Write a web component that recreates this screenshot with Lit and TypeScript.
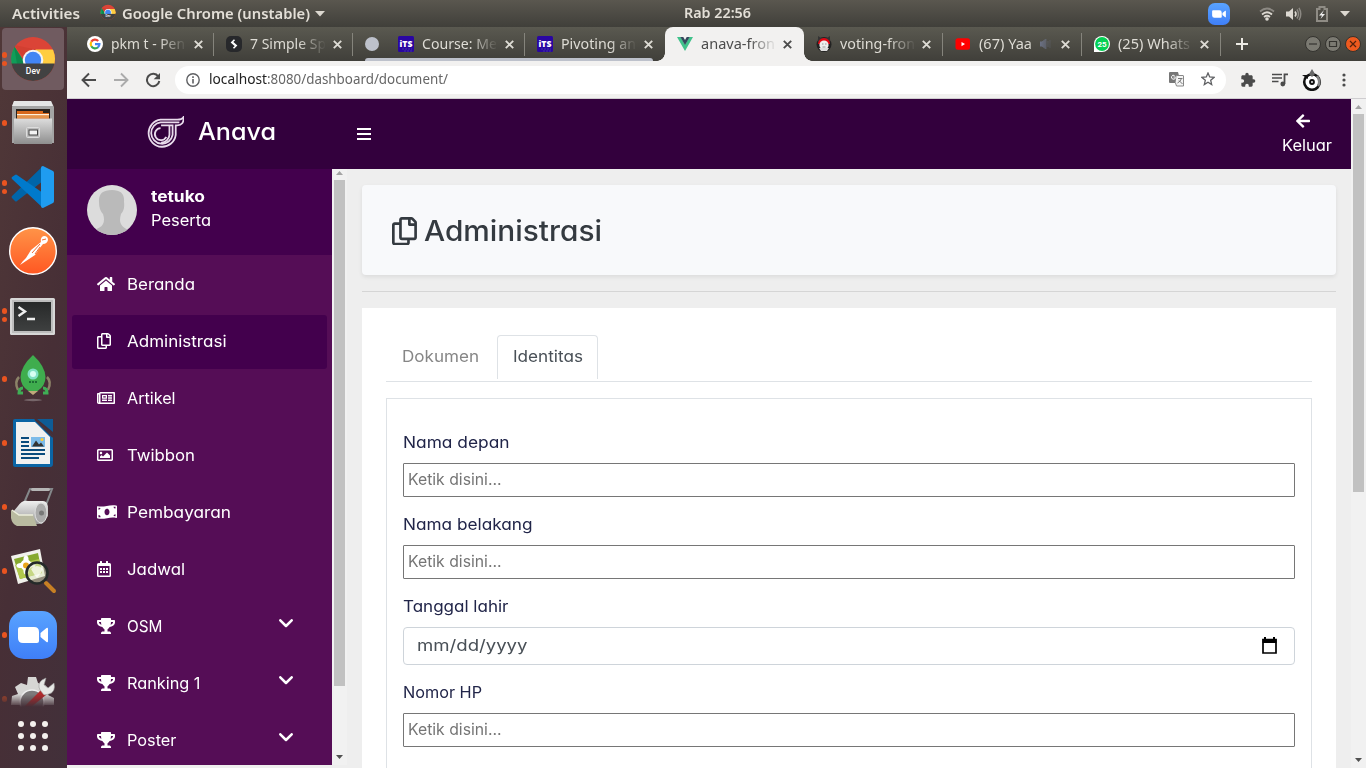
import { LitElement, html, svg, css, nothing } from "lit";
import { customElement, property } from "lit/decorators.js";
import { classMap } from "lit/directives/class-map.js";

/** A single line of text stretched horizontally to a given width. */
@customElement("fit-label")
class FitLabel extends LitElement {
  @property() text = "";
  @property({ type: Number }) w = 0;
  static styles = css`
    :host { display: inline-block; white-space: pre; }
    span { display: inline-block; transform-origin: 0 50%; }
  `;
  render() {
    return html`<span>${this.text}</span>`;
  }
  updated() {
    const el = this.renderRoot.querySelector("span") as HTMLElement;
    el.style.transform = "none";
    this.style.width = "auto";
    const natural = el.getBoundingClientRect().width;
    if (this.w && natural) {
      el.style.transform = `scaleX(${this.w / natural})`;
      this.style.width = `${this.w}px`;
    }
  }
}

const label = (text: string, w: number) => html`<fit-label .text=${text} .w=${w}></fit-label>`;

const fa = (w: number, d: string, size = 16, color = "#fff") =>
  html`<svg width=${(w / 512) * size} height=${size} viewBox="0 0 ${w} 512"><path fill=${color} fill-rule="evenodd" d=${d} /></svg>`;

const HOME = "M280.37 148.26L96 300.11V464a16 16 0 0 0 16 16l112.06-.29a16 16 0 0 0 15.92-16V368a16 16 0 0 1 16-16h64a16 16 0 0 1 16 16v95.64a16 16 0 0 0 16 16.05L464 480a16 16 0 0 0 16-16V300L295.67 148.26a12.19 12.19 0 0 0-15.3 0zM571.6 251.47L488 182.56V44.05a12 12 0 0 0-12-12h-56a12 12 0 0 0-12 12v72.61L318.47 43a48 48 0 0 0-61 0L4.34 251.47a12 12 0 0 0-1.6 16.9l25.5 31A12 12 0 0 0 45.15 301l235.22-193.74a12.19 12.19 0 0 1 15.3 0L530.9 301a12 12 0 0 0 16.9-1.6l25.5-31a12 12 0 0 0-1.7-16.93z";
const COPY = "M433.941 65.941l-51.882-51.882A48 48 0 0 0 348.118 0H176c-26.51 0-48 21.49-48 48v48H48c-26.51 0-48 21.49-48 48v320c0 26.51 21.49 48 48 48h224c26.51 0 48-21.49 48-48v-48h80c26.51 0 48-21.49 48-48V99.882a48 48 0 0 0-14.059-33.941zM266 464H54a6 6 0 0 1-6-6V150a6 6 0 0 1 6-6h74v224c0 26.51 21.49 48 48 48h96v42a6 6 0 0 1-6 6zm128-96H182a6 6 0 0 1-6-6V54a6 6 0 0 1 6-6h106v88c0 13.255 10.745 24 24 24h88v202a6 6 0 0 1-6 6zm6-256h-64V48h9.632c1.591 0 3.117.632 4.243 1.757l48.368 48.368a6 6 0 0 1 1.757 4.243V112z";
const NEWS = "M552 64H112c-20.858 0-38.643 13.377-45.248 32H24c-13.255 0-24 10.745-24 24v272c0 30.928 25.072 56 56 56h496c13.255 0 24-10.745 24-24V88c0-13.255-10.745-24-24-24zM48 392V144h16v248c0 4.411-3.589 8-8 8s-8-3.589-8-8zm480 8H111.422c.374-2.614.578-5.283.578-8V112h416v288zM172 280h136c6.627 0 12-5.373 12-12v-96c0-6.627-5.373-12-12-12H172c-6.627 0-12 5.373-12 12v96c0 6.627 5.373 12 12 12zm28-80h80v40h-80v-40zm-40 140v-24c0-6.627 5.373-12 12-12h136c6.627 0 12 5.373 12 12v24c0 6.627-5.373 12-12 12H172c-6.627 0-12-5.373-12-12zm192 0v-24c0-6.627 5.373-12 12-12h104c6.627 0 12 5.373 12 12v24c0 6.627-5.373 12-12 12H364c-6.627 0-12-5.373-12-12zm0-144v-24c0-6.627 5.373-12 12-12h104c6.627 0 12 5.373 12 12v24c0 6.627-5.373 12-12 12H364c-6.627 0-12-5.373-12-12zm0 72v-24c0-6.627 5.373-12 12-12h104c6.627 0 12 5.373 12 12v24c0 6.627-5.373 12-12 12H364c-6.627 0-12-5.373-12-12z";
const IMAGE = "M464 64H48C21.49 64 0 85.49 0 112v288c0 26.51 21.49 48 48 48h416c26.51 0 48-21.49 48-48V112c0-26.51-21.49-48-48-48zm-6 336H54a6 6 0 0 1-6-6V118a6 6 0 0 1 6-6h404a6 6 0 0 1 6 6v276a6 6 0 0 1-6 6zM128 152c-22.091 0-40 17.909-40 40s17.909 40 40 40 40-17.909 40-40-17.909-40-40-40zM96 352h320v-80l-87.515-87.515c-4.686-4.686-12.284-4.686-16.971 0L192 304l-39.515-39.515c-4.686-4.686-12.284-4.686-16.971 0L96 304v48z";
const TROPHY = "M552 64H448V24c0-13.3-10.7-24-24-24H152c-13.3 0-24 10.7-24 24v40H24C10.7 64 0 74.7 0 88v56c0 35.7 22.5 72.4 61.9 100.7 31.5 22.7 69.8 37.1 110 41.7C203.3 338.5 240 360 240 360v72h-48c-35.3 0-64 20.7-64 56v12c0 6.6 5.4 12 12 12h296c6.6 0 12-5.4 12-12v-12c0-35.3-28.7-56-64-56h-48v-72s36.7-21.5 68.1-73.6c40.3-4.6 78.6-19 110-41.7 39.3-28.3 61.9-65 61.9-100.7V88c0-13.3-10.7-24-24-24zM99.3 192.8C74.9 175.2 64 155.6 64 144v-16h64.2c1 32.6 5.8 61.2 12.8 86.2-15.1-5.2-29.2-12.4-41.7-21.4zM512 144c0 16.1-17.7 36.1-35.3 48.8-12.5 9-26.7 16.2-41.8 21.4 7-25 11.8-53.6 12.8-86.2H512v16z";
const ARROW = "M257.5 445.1l-22.2 22.2c-9.4 9.4-24.6 9.4-33.9 0L7 273c-9.4-9.4-9.4-24.6 0-33.9L201.4 44.7c9.4-9.4 24.6-9.4 33.9 0l22.2 22.2c9.5 9.5 9.3 25-.4 34.3L136.6 216H424c13.3 0 24 10.7 24 24v32c0 13.3-10.7 24-24 24H136.6l120.5 114.8c9.8 9.3 10 24.8.4 34.3z";

const money = html`<svg width="20" height="16" viewBox="0 0 20 16"><path fill="#fff" fill-rule="evenodd" d="M0 2.6Q0 2 .8 2.2C7 3.6 12 .2 19.2 1.4q.8.2.8.9v11q0 .8-.8.6C13 12.4 8 15.800 .8 14.600Q0 14.400 0 13.700zM10 4.800c-1.500 0-2.500 1.400-2.500 3.200s1 3.200 2.500 3.200 2.500-1.400 2.500-3.200S11.500 4.800 10 4.800zM1.500 3.700v2a2 2 0 0 0 2-1.800zM18.500 12.300v-2a2 2 0 0 0-2 1.700zM1.500 11v2.200l2 .1A2 2 0 0 0 1.500 11zM16.500 2.700a2 2 0 0 0 2 1.900V2.800z"/></svg>`;
const calendar = html`<svg width="14" height="16" viewBox="0 0 14 16"><path fill="#fff" fill-rule="evenodd" d="M3 .4Q3 0 3.400 0h1.200Q5 0 5 .4V2h4V.4Q9 0 9.400 0h1.200q.4 0 .4.4V2h1.500Q14 2 14 3.500v11q0 1.500-1.500 1.500h-11Q0 16 0 14.500v-11Q0 2 1.500 2H3zM1.500 5v9.300q0 .2.200.2h10.600q.2 0 .2-.2V5z"/><path fill="#fff" d="M3 7h2v2H3zM6 7h2v2H6zM9 7h2v2H9zM3 10h2v2H3zM6 10h2v2H6zM9 10h2v2H9z"/></svg>`;
const chevron = html`<svg width="14" height="9" viewBox="0 0 14 9"><path d="M1.300 1.300 7 7l5.700-5.700" fill="none" stroke="#fff" stroke-width="2.500" stroke-linecap="round" stroke-linejoin="round"/></svg>`;

/** Favicons, all in a 16px square. */
const fav: Record<string, unknown> = {
  google: svg`<circle cx="8" cy="8" r="8" fill="#fff"/><g fill="none" stroke-width="2.200"><path d="M4.300 5.700A4.400 4.400 0 0 1 11.200 5" stroke="#ea4335"/><path d="M4.300 10.300a4.600 4.600 0 0 1 0-4.600" stroke="#fbbc05"/><path d="M11 11.300a4.400 4.400 0 0 1-6.700-1" stroke="#34a853"/><path d="M8 8.200h4.400a4.400 4.400 0 0 1-1.500 3.200" stroke="#4285f4"/></g>`,
  simple: svg`<rect width="16" height="16" rx="5" fill="#27282b"/><path d="M8.500 3.800 5.800 6.500l3.600 3.200M7.500 12.300l2.700-2.700-3.600-3.200" fill="none" stroke="#fff" stroke-width="1.600"/>`,
  its: svg`<rect width="16" height="16" rx="1.500" fill="#2a06a2"/><text x="1.500" y="10.600" font-family="Open Sans,sans-serif" font-size="8" font-weight="800" fill="#fff" textLength="13" lengthAdjust="spacingAndGlyphs">iTS</text><path d="M4 13h10M6 15h8" stroke="#4334a4" stroke-dasharray="2 1"/>`,
  vue: svg`<path d="M0 1h3.500L8 8.500 12.500 1H16L8 15z" fill="#41c28b"/><path d="M3.300 1h3L8 4l1.700-3h3L8 9z" fill="#35495e"/>`,
  voting: svg`<circle cx="8" cy="8.500" r="7.500" fill="#222"/><path d="M2 0l3 2h6l3-2v6H2z" fill="#333"/><path d="M2 8a6 6 0 0 1 12 0z" fill="#e30613"/><circle cx="8" cy="9" r="4.600" fill="#eee"/><path d="M3 12h10l-2 3H5z" fill="#ddd"/><path d="M6 8h1.500M9 8h1.500M6.500 11h3" stroke="#999"/>`,
  youtube: svg`<rect x=".5" y="2.300" width="14.500" height="11.500" rx="2.500" fill="#f00"/><path d="M6.500 5.900v4.300L10 8z" fill="#fff"/>`,
  whatsapp: svg`<path d="M0 16V8A8 8 0 1 1 8 16z" fill="#fff"/><circle cx="8" cy="8" r="6.900" fill="#05d054"/><text x="8" y="10.900" text-anchor="middle" font-family="Roboto,sans-serif" font-size="8" font-weight="700" fill="#fff">25</text>`,
};

/** Launcher icons, all in a 48px square. */
const chrome = svg`<clipPath id="cr"><circle cx="24" cy="24" r="22"/></clipPath><g clip-path="url(#cr)"><rect width="48" height="48" fill="#db4437"/><path d="M0 10 5 11l12 18H0z" fill="#109d59"/><path d="M5 11 16 29H8z" fill="#0c8a4c"/><path d="M26 14.500h22V29H26z" fill="#ffcd40"/><path d="M5 10 18 27l9-12.500z" fill="#d23f31"/><circle cx="24" cy="25" r="10.300" fill="#f4f4f4"/><circle cx="24" cy="25" r="8.200" fill="#4285f4"/><rect y="28.500" width="48" height="20" fill="#424242"/></g><text x="24" y="38.800" text-anchor="middle" font-family="Roboto,sans-serif" font-size="8.500" font-weight="500" fill="#fff">Dev</text>`;
const camera = svg`<rect width="48" height="48" rx="15" fill="url(#zm)"/><linearGradient id="zm" x2="0" y2="1"><stop stop-color="#59a3ff"/><stop offset="1" stop-color="#3f7ff8"/></linearGradient><path d="M9 18q0-2 2-2h14q5 0 5 5v9q0 2-2 2H14q-5 0-5-5zM31.500 22l6-5q1.500-1 1.500 1v12q0 2-1.500 1l-6-5z" fill="#fff"/>`;
const dock: { dots: number; art: unknown }[] = [
  { dots: 2, art: chrome },
  { dots: 1, art: svg`<linearGradient id="fl" x2="0" y2="1"><stop stop-color="#ddd"/><stop offset="1" stop-color="#8e8e8e"/></linearGradient><path d="M5 2h37l3 6v36H3V8z" fill="#a4a4a4"/><path d="M5 2h37l2 5H3z" fill="#e5e5e5"/><path d="M7 10h34v10H7z" fill="#29211c"/><path d="M8 12h26v2h6v6H8z" fill="#d7681d"/><path d="M8 15h32v1.500H8z" fill="#fff1dc"/><path d="M8 16.500h32v2.500H8z" fill="#e5944c"/><path d="M5 19.500h38V45H5z" fill="url(#fl)"/><rect x="17.500" y="28.500" width="13" height="10" rx="1" fill="#bbb" stroke="#ddd"/><rect x="20" y="31" width="8.500" height="5" fill="#f4f4f4" stroke="#444"/>` },
  { dots: 2, art: svg`<path d="M34 3v15L8 38q-1 1-2 0l-3-3q-1-1 0-2z" fill="#0065a9"/><path d="M34 45V30L8 12q-1-1-2 0l-3 2q-1 1 0 2l31 29z" fill="#007acc"/><path d="M34 3l10 5q1 .5 1 2v28q0 1.500-1 2l-10 5q-2 0-2-2V5q0-2 2-2z" fill="#1f9cf0"/>` },
  { dots: 0, art: svg`<linearGradient id="pm" x2="0" y2="1"><stop stop-color="#ff9448"/><stop offset="1" stop-color="#ff5722"/></linearGradient><circle cx="24" cy="24" r="23.300" fill="url(#pm)" stroke="#fff" stroke-width="1.400"/><path d="M11 38l3-4 3-3 5-8 10-8q-1-5 3-6 4 0 4 4-1 4-5 4l-4 5-4 6-9 6z" fill="#fff"/><path d="M31 17l-8 9M26 27l5-7M33 13l4-1" stroke="#f36b33" stroke-width="1"/>` },
  { dots: 2, art: svg`<linearGradient id="tm" x2="0" y2="1"><stop stop-color="#272929"/><stop offset="1" stop-color="#3e4040"/></linearGradient><g transform="translate(0 2)"><rect x="1" y="5" width="45" height="37" rx="1.500" fill="#d7d7d7"/><rect x="3" y="7" width="41" height="33" fill="#bdbdbd"/><rect x="5" y="9" width="37" height="29" fill="url(#tm)"/><path d="M9.500 14l6.500 4.500-6.500 4.500M18 26h8" fill="none" stroke="#eee" stroke-width="2.400"/></g>` },
  { dots: 1, art: svg`<g transform="translate(0 2)"><path d="M10 20q-5 5-1 13M38 20q5 5 1 13" stroke="#8c8368" stroke-width="2.500" fill="none"/><path d="M14 36h-4q0-5 4-5M34 36h4q0-5-4-5" fill="none" stroke="#3fae55" stroke-width="3"/><path d="M19 34h10l-5 4z" fill="#c1a87b"/><path d="M24-2q12 11 12.500 22 0 9-8 14h-9q-8-5-8-14Q12 9 24-2z" fill="#3fad4e"/><circle cx="24" cy="17" r="5.500" fill="#7fe0c3"/><circle cx="24" cy="17" r="3" fill="#d7fff2"/><path d="M20 25h8" stroke="#1d6d35" stroke-width="2" stroke-dasharray="2 1"/><ellipse cx="24" cy="43" rx="9" ry="1.200" fill="#77666a"/></g>` },
  { dots: 1, art: svg`<path d="M6 0h21l17 17v28q0 3-3 3H6q-2 0-2-2V2q0-2 2-2z" fill="#0b65a5"/><path d="M28 0h16v13z" fill="#0e5c96"/><path d="M7 3h19l15 15v27H7z" fill="#f1f1f1"/><path d="M26 0 44 18" stroke="#463139" stroke-width="2"/><path d="M12 19h8M12 23h8M12 27h8M12 31h24M12 35h24M12 39h18" stroke="#094b7d" stroke-width="1.800"/><path d="M22 18h14v10H22z" fill="#7dbbe9"/><path d="M23 27.500l4-6 3 4 2-2 3 4z" fill="#333"/><circle cx="33" cy="20.500" r="1.500" fill="#fc3"/>` },
  { dots: 1, art: svg`<path d="M15 20 21 6h22L34 30" fill="none" stroke="#84888a" stroke-width="2"/><rect x="22" y="5" width="19" height="3" rx="1.500" fill="#b5b5b5"/><linearGradient id="rl" x2="0" y2="1"><stop stop-color="#f0f0f0"/><stop offset="1" stop-color="#999"/></linearGradient><path d="M9 23q4-6 10-5h15q5 0 5 8v7l-6 8H9q-7-2-5-12z" fill="url(#rl)"/><ellipse cx="32" cy="30" rx="6" ry="10" fill="#aaa" stroke="#ddd"/><circle cx="32.500" cy="30" r="2.500" fill="#777"/><path d="M2 27l8 5h14l4 11H8q-5-2-6-8z" fill="#b9baa0"/><path d="M3 27l7 5h14" fill="none" stroke="#edeedc" stroke-width="1.500"/>` },
  { dots: 1, art: svg`<path d="M2 9l29-7 5 27-27 8z" fill="#f1f1eb"/><path d="M5 12l24-6 4 20-22 6z" fill="#86a92e"/><path d="M6 18l24-6 3 14-22 6z" fill="#b1c94c"/><g fill="#fff"><ellipse cx="17" cy="13" rx="2.600" ry="4.500"/><ellipse cx="17" cy="23" rx="2.600" ry="4.500"/><ellipse cx="12" cy="18.500" rx="4.500" ry="2.600"/><ellipse cx="22" cy="18" rx="4.500" ry="2.600"/><ellipse cx="17" cy="18" rx="5.500" ry="5.500"/></g><circle cx="17" cy="18.500" r="3" fill="#e9a51e"/><path d="M37 36l8 8" stroke="#c78024" stroke-width="4" stroke-linecap="round"/><circle cx="28" cy="26" r="10.500" fill="#dce5bb" fill-opacity=".5" stroke="#252a29" stroke-width="2.600"/><path d="M22 22q6-6 12 0l-2 4-4 5-3-4z" fill="#fff" opacity=".7"/>` },
  { dots: 1, art: camera },
];

const NAV = [
  { t: "Beranda", w: 68, i: fa(576, HOME) },
  { t: "Administrasi", w: 99.500, i: fa(448, COPY), active: true },
  { t: "Artikel", w: 48.500, i: fa(576, NEWS) },
  { t: "Twibbon", w: 68, i: fa(512, IMAGE) },
  { t: "Pembayaran", w: 104, i: money },
  { t: "Jadwal", w: 58, i: calendar },
  { t: "OSM", w: 35.500, i: fa(576, TROPHY), sub: true },
  { t: "Ranking 1", w: 73.500, i: fa(576, TROPHY), sub: true },
  { t: "Poster", w: 49.500, i: fa(576, TROPHY), sub: true },
];

const TABS = [
  { f: "google", t: "pkm t - Pen", w: 74, sep: true },
  { f: "simple", t: "7 Simple Sp", w: 76, sep: true },
  { f: "its", t: "Course: Me", w: 75, sep: true, group: true },
  { f: "its", t: "Pivoting an", w: 75 },
  { f: "vue", t: "anava-fron", w: 74, active: true },
  { f: "voting", t: "voting-fron", w: 75, sep: true },
  { f: "youtube", t: "(67) Yaa", w: 53, sound: true, sep: true },
  { f: "whatsapp", t: "(25) Whats", w: 72, sep: true },
];

@customElement("desktop-panel")
class DesktopPanel extends LitElement {
  static styles = css`
    :host { display: grid; grid-template-columns: 671.500px auto 1fr; align-items: center; height: 27px; box-sizing: border-box; padding: 0 16px 0 12px; background: linear-gradient(#5a574f, #403f3a); color: #e3dfd7; font: 600 14px/26px "Noto Sans", sans-serif; }
    .left, .right { display: flex; align-items: center; }
    .chrome { margin: 0 6px 3px 20px; }
    .caret { margin-left: 5px; }
    .right { justify-content: flex-end; }
    .zoom { margin-right: 29px; }
    .wifi { margin-right: 11px; }
    .vol { margin-right: 14px; }
    .bat { margin-right: 7px; }
    svg { display: block; flex: none; }
    .mid { padding-bottom: 1px; }
  `;
  render() {
    const caret = html`<svg class="caret" width="10" height="6"><path d="M0 0h10L5 5.500z" fill="#dcd8d0" /></svg>`;
    return html`
      <div class="left">
        ${label("Activities", 68)}
        <svg class="chrome" width="16" height="16" viewBox="1 0 46 46">${chrome}</svg>
        ${label("Google Chrome (unstable)", 188)} ${caret}
      </div>
      <div class="mid">${label("Rab 22:56", 67)}</div>
      <div class="right">
        <svg class="zoom" width="22" height="22" viewBox="0 0 48 48">${camera}</svg>
        <svg class="wifi" width="16" height="14" viewBox="0 0 16 14"><g fill="none" stroke-width="1.700"><path d="M1 4.500q7-6 14 0" stroke="#8c8983"/><path d="M3 7.500q5-4.500 10 0M5 10q3-2.500 6 0" stroke="#ddd9d2"/></g><circle cx="8" cy="12" r="1.800" fill="#ddd9d2"/></svg>
        <svg class="vol" width="16" height="14" viewBox="0 0 16 14"><path d="M0 4.500h3L7 1v12L3 9.500H0z" fill="#ddd9d2"/><path d="M9 4.500q2 2.500 0 5" fill="none" stroke="#ddd9d2" stroke-width="1.600"/><path d="M11 2.500q3 4.500 0 9M13 .8q3.500 6.200 0 12.400" fill="none" stroke="#8c8983" stroke-width="1.500"/></svg>
        <svg class="bat" width="12" height="16" viewBox="0 0 12 16"><path d="M1 3h2.500V1h5v2H11v12H1z" fill="none" stroke="#8f8c85" stroke-width="2"/><path d="M8 4 3 9.500h3L4.500 13 9 8H6z" fill="#eee"/></svg>
        ${caret}
      </div>`;
  }
}

@customElement("app-dock")
class AppDock extends LitElement {
  static styles = css`
    :host { display: flex; flex-direction: column; width: 67px; height: 741px; background: linear-gradient(100deg, #503838, #472f36 55%, #42303a); overflow: hidden; }
    .item { height: 64px; display: grid; grid-template-columns: 9px 48px; align-items: center; flex: none; }
    .first { background: #705b60; border-radius: 4px; width: 62px; height: 62px; margin: 1px 0 1px 2px; grid-template-columns: 7px 48px; }
    .dots { display: flex; flex-direction: column; align-items: center; gap: 3px; }
    .first .dots { margin-left: -2px; }
    .dot { width: 5.500px; height: 5.500px; border-radius: 50%; background: #e95420; }
    .cut { height: 42px; align-items: start; overflow: hidden; -webkit-mask-image: linear-gradient(#000 65%, transparent 95%); }
    .cut .dots { margin-top: 29px; opacity: 0.500; }
    .cut svg { margin-top: 8px; }
    .grid { margin: 12px 0 0 18px; display: grid; grid-template-columns: repeat(3, 6px); gap: 6px; }
    .grid i { width: 6px; height: 6px; border-radius: 50%; background: #f4f1ee; }
    svg { display: block; overflow: visible; }
  `;
  render() {
    return html`
      ${dock.map((d, i) => html`<div class=${classMap({ item: true, first: i === 0 })}>
        <div class="dots">${Array.from({ length: d.dots }, () => html`<span class="dot"></span>`)}</div>
        <svg width="48" height="48" viewBox="0 0 48 48">${d.art}</svg>
      </div>`)}
      <div class="item cut">
        <div class="dots"><span class="dot"></span></div>
        <svg width="48" height="40" viewBox="0 0 48 40"><path d="M2 30l1-9 6-2-3-7 6-4 6 2 1-8h8l2 6 7 2 5 5-2 5 6 3v7z" fill="#d6d6d4"/><circle cx="23" cy="27" r="12" fill="#7d7a7b" stroke="#eee" stroke-width="1.500"/><path d="M15 32 32 15l5 5-16 13z" fill="#b22b2d"/><path d="M31 15q-3-6 2-10l4-2-2 7 4 3 6-5q2 9-5 11l-5 1z" fill="#e7e7e5" stroke="#999" stroke-width=".6"/></svg>
      </div>
      <div class="grid">${Array.from({ length: 9 }, () => html`<i></i>`)}</div>`;
  }
}

@customElement("browser-chrome")
class BrowserChrome extends LitElement {
  static styles = css`
    :host { display: block; font: 14px/20px "Noto Sans", sans-serif; height: 72px; }
    svg { display: block; flex: none; }
    .strip { display: flex; height: 34px; padding-left: 8px; background: linear-gradient(#5a5950, #403f3a); color: #dedcd5; }
    .tab { width: 139.150px; height: 34px; box-sizing: border-box; padding: 0 10px 0 12px; display: flex; align-items: center; position: relative; flex: none; }
    .sep { border-right: 1px solid transparent; border-image: linear-gradient(transparent 7px, #85847c 7px, #85847c 28px, transparent 28px) 1; }
    .active { background: #f2f1f0; color: #4c4c4c; border-radius: 8px 8px 0 0; }
    .active::before, .active::after { content: ""; position: absolute; bottom: 0; width: 8px; height: 8px; }
    .active::before { left: -8px; background: radial-gradient(circle at 0 0, transparent 7.500px, #f2f1f0 8px); }
    .active::after { right: -8px; background: radial-gradient(circle at 100% 0, transparent 7.500px, #f2f1f0 8px); }
    .txt { margin-left: 8px; width: 76px; overflow: hidden; height: 20px; -webkit-mask-image: linear-gradient(90deg, #000 64%, transparent); display: flex; align-items: center; }
    .snd { margin-left: 8px; }
    .close { margin-left: 6.500px; }
    .chip { width: 33px; display: flex; align-items: center; flex: none; }
    .chip i { width: 14px; height: 14px; border-radius: 50%; background: #bdc1cb; margin-left: 12px; }
    .line { position: absolute; left: -21px; width: 288px; height: 3px; bottom: 0; background: #bdc1cb; border-radius: 3px 3px 0 0; z-index: 1; }
    .plus { margin: 11px 0 0 15px; }
    .win { display: flex; gap: 4px; margin: 9px 5px 0 auto; }
    .bar { display: flex; align-items: center; height: 37px; background: #f2f1f0; border-bottom: 1px solid #cfcdd0; padding: 0 22px 0 14px; box-sizing: content-box; }
    .nav { display: flex; gap: 16px; margin-right: 14px; }
    .omni { flex: 1; height: 28px; border-radius: 14px; background: #fff; display: flex; align-items: center; padding: 0 11px; box-sizing: border-box; color: #666; margin-right: 14px; }
    .host { color: #222; margin-left: 9px; }
    .omni fit-label { padding-bottom: 1px; }
    .end { margin-left: auto; display: flex; gap: 17px; }
    .ext { display: grid; grid-template-columns: 16px 16px 20px 4px; column-gap: 16px; align-items: center; }
    .avatar { margin-left: -2px; }
    .dots { margin-left: 2px; }
  `;
  render() {
    const x = (c: string) => html`<svg class="close" width="9" height="9" viewBox="0 0 9 9"><path d="M.8.800l7.400 7.400M8.200.800.800 8.200" stroke=${c} stroke-width="1.900"/></svg>`;
    const tab = (t: any) => html`
      ${t.group ? html`<div class="chip"><i></i></div>` : nothing}
      <div class=${classMap({ tab: true, sep: !!t.sep, active: !!t.active })}>
        ${t.group ? html`<span class="line"></span>` : nothing}
        <svg width="16" height="16" viewBox="0 0 16 16">${fav[t.f]}</svg>
        <div class="txt">${label(t.t, t.w)}
          ${t.sound ? html`<svg class="snd" width="11" height="10" viewBox="0 0 11 10"><path d="M0 3h2l4-3v10L2 7H0zM8 2v6M10 1v8" fill="#8490b8" stroke="#8490b8"/></svg>` : nothing}
        </div>
        ${x(t.active ? "#4c4c4c" : "#dedcd5")}
      </div>`;
    const btn = (fill: string, mark: string, ink: string) => html`<svg width="16" height="16" viewBox="0 0 16 16"><circle cx="8" cy="8" r="7.500" fill=${fill} stroke="#34332f"/><path d=${mark} fill="none" stroke=${ink} stroke-width="1.200"/></svg>`;
    return html`
      <div class="strip">
        ${TABS.map(tab)}
        <svg class="plus" width="12" height="12"><path d="M6 0v12M0 6h12" stroke="#eceae4" stroke-width="2"/></svg>
        <div class="win">
          ${btn("#7b7a72", "M4 8h8", "#34332f")}${btn("#7b7a72", "M4.500 5.500h7v5h-7z", "#34332f")}${btn("#ee5a1f", "M5 5l6 6M11 5l-6 6", "#54210c")}
        </div>
      </div>
      <div class="bar">
        <div class="nav">
          <svg width="16" height="16" viewBox="0 0 16 16"><path d="M15 8H2M8 1.500 1.500 8 8 14.500" fill="none" stroke="#4b4b4b" stroke-width="1.900"/></svg>
          <svg width="16" height="16" viewBox="0 0 16 16"><path d="M1 8h13M8 1.500 14.500 8 8 14.500" fill="none" stroke="#ababab" stroke-width="1.900"/></svg>
          <svg width="16" height="16" viewBox="0 0 16 16"><path d="M13.300 4.500A6.200 6.200 0 1 0 14.300 9" fill="none" stroke="#4b4b4b" stroke-width="2"/><path d="M15 1v6.300H8.700z" fill="#4b4b4b"/></svg>
        </div>
        <div class="omni">
          <svg width="14" height="14" viewBox="0 0 14 14"><circle cx="7" cy="7" r="6.200" fill="none" stroke="#5f6063" stroke-width="1.400"/><path d="M7 6v4.500M7 3.300v1.600" stroke="#5f6063" stroke-width="1.600"/></svg>
          <span class="host">${label("localhost", 58)}</span>${label(":8080/dashboard/document/", 181)}
          <div class="end">
            <svg width="15" height="15" viewBox="0 0 15 15"><path d="M1 0h8l3 11H1q-1 0-1-1V1q0-1 1-1z" fill="#777"/><path d="M7.500 3.500H14q.5 0 .5.500v10h-7L6.500 11" fill="#f4f4f4" stroke="#888"/><path d="M6.500 5H4.500M6.500 5.500a2 2 0 1 1-1-2" stroke="#fff" fill="none"/><path d="M9 6.500h4.500M12.500 6.500q-1 3-4 4.500M10 8.500l3.500 3.500" stroke="#777" fill="none"/></svg>
            <svg width="14" height="14" viewBox="0 0 14 14"><path d="M7 1l1.700 4 4.300.4-3.300 2.900 1 4.300L7 10.300l-3.700 2.300 1-4.300L1 5.400 5.300 5z" fill="none" stroke="#5f6063" stroke-width="1.300"/></svg>
          </div>
        </div>
        <div class="ext">
          <svg width="16" height="16" viewBox="0 0 24 24"><path fill="#4b4b4b" d="M20.500 11H19V7c0-1.100-.9-2-2-2h-4V3.500a2.500 2.500 0 0 0-5 0V5H4c-1.100 0-2 .9-2 2v3.800h1.500a2.700 2.700 0 0 1 0 5.400H2V20c0 1.100.9 2 2 2h3.800v-1.500a2.700 2.700 0 0 1 5.400 0V22H17c1.100 0 2-.9 2-2v-4h1.500a2.500 2.500 0 0 0 0-5z"/></svg>
          <svg width="16" height="14" viewBox="0 0 16 14"><path d="M0 1.500h10M0 5h10M0 8.500h6.500" stroke="#4b4b4b" stroke-width="1.700"/><path d="M12.500 11V1.300H16" fill="none" stroke="#4b4b4b" stroke-width="1.800"/><circle cx="10.800" cy="11" r="2.400" fill="#4b4b4b"/></svg>
          <svg class="avatar" width="20" height="22" viewBox="0 0 20 22"><circle cx="10" cy="13" r="7.800" fill="#fff" stroke="#111" stroke-width="2.600"/><path d="M15 7q4 5 1 10" stroke="#888" stroke-width="2.600" fill="none"/><circle cx="10" cy="13" r="1.900" fill="none" stroke="#111" stroke-width="2"/><path d="M10 0l3 5-3 3-3-3z" fill="#666"/><path d="M0 6h6v4z" fill="#111"/></svg>
          <svg class="dots" width="4" height="14" viewBox="0 0 4 14"><g fill="#4b4b4b"><circle cx="2" cy="2" r="1.600"/><circle cx="2" cy="7" r="1.600"/><circle cx="2" cy="12" r="1.600"/></g></svg>
        </div>
      </div>`;
  }
}

/** Classic scroll bar with an arrow at each end. */
@customElement("scroll-rail")
class ScrollRail extends LitElement {
  @property({ type: Number }) thumb = 100;
  static styles = css`
    :host { display: flex; flex-direction: column; align-items: center; width: 15px; background: #f1f1f1; }
    .thumb { width: 11px; background: #c1c1c1; margin: 5px 0 auto; }
    svg { display: block; }
    .up { margin-top: var(--rail-top, 6px); }
    .down { margin-bottom: 6px; }
  `;
  render() {
    return html`<svg class="up" width="7" height="4"><path d="M0 4 3.500 0 7 4z" fill="#a3a3a3"/></svg>
      <div class="thumb" style="height:${this.thumb}px"></div>
      <svg class="down" width="7" height="4"><path d="M0 0h7L3.500 4z" fill="#505050"/></svg>`;
  }
}

@customElement("anava-page")
class AnavaPage extends LitElement {
  static styles = css`
    :host { display: flex; width: 1299px; height: 669px; font: 16px/24px Inter, sans-serif; font-feature-settings: "cv11"; background: #eee; overflow: hidden; }
    svg { display: block; flex: none; }
    .page { width: 1284px; display: flex; flex-direction: column; }
    .top { height: 70px; background: #33003d; color: #fff; display: flex; align-items: center; flex: none; }
    .logo { margin-left: 79px; margin-top: -3px; }
    .brand { font-size: 24px; font-weight: 500; margin: -4px 0 0 14px; width: 159px; }
    .exit { margin: 0 19px 0 auto; display: flex; flex-direction: column; align-items: center; gap: 4px; padding-top: 1px; }
    .exit svg { margin-right: 9px; }
    .body { display: flex; height: 599px; }
    .side { width: 265px; height: 596px; background: #550d56; color: #fff; overflow: hidden; }
    .user { height: 86px; background: #43004d; display: flex; box-sizing: border-box; padding: 16px 20px; gap: 14px; }
    .name { font-weight: 700; }
    .who { display: flex; flex-direction: column; margin-top: -1px; }
    .menu { padding: 3px 5px; display: flex; flex-direction: column; gap: 3px; }
    .link { height: 54px; box-sizing: border-box; border-radius: 3px; display: grid; grid-template-columns: 30px 1fr auto; align-items: center; padding: 0 34px 2px 25px; }
    .on { background: #43004d; }
    .link .chev { margin-bottom: 6px; }
    .rail { height: 596px; --rail-top: 2px; }
    .main { flex: 1; padding: 16px 15px 0; height: 583px; overflow: hidden; }
    .card { height: 90px; box-sizing: border-box; background: #f8f9fb; border-radius: 4px; box-shadow: 0 2px 4px rgba(0, 0, 0, 0.080); display: flex; align-items: center; padding: 2px 0 0 30px; gap: 7px; color: #343a40; font-size: 28px; font-weight: 500; line-height: 34px; }
    .rule { height: 1px; background: #d5d5d5; margin: 16px 0; }
    .panel { background: #fff; height: 600px; padding: 27px 24px 0; }
    .tabs { display: flex; height: 46px; border-bottom: 1px solid #dee2e6; color: #868686; }
    .t1 { width: 95px; padding: 9px 0 0 16px; box-sizing: content-box; }
    .t2 { box-sizing: border-box; width: 101px; height: 44px; padding: 8px 0 0 15px; border: 1px solid #dee2e6; border-bottom: 0; border-radius: 4px 4px 0 0; color: #495057; }
    .form { margin-top: 16px; border: 1px solid #dee2e6; height: 480px; padding: 31px 16px 0; color: #212549; }
    .form > fit-label { display: block; height: 24px; }
    .in { height: 34px; box-sizing: border-box; border: 1px solid #767676; border-radius: 1px; margin: 9px 0 15px; padding: 3px 4px; color: #757575; }
    .date { height: 38px; box-sizing: border-box; border: 1px solid #ced4da; border-radius: 4px; margin: 9px 0 15px; padding: 0 17px 1px 13px; color: #495057; display: flex; align-items: center; justify-content: space-between; }
    .date fit-label { margin-bottom: 1px; }
  `;
  render() {
    const field = (t: string, w: number) => html`${label(t, w)}<div class="in">${label("Ketik disini...", 93.500)}</div>`;
    return html`
      <div class="page">
        <div class="top">
          <svg class="logo" width="38" height="34" viewBox="1.500 0 35.500 32.500"><g fill="none" stroke="#e9dcec" stroke-width="1.700"><path d="M31 9h-1.500v9A13 13 0 1 1 15 3.500h16q4.500 0 6-2.500.5 8-6 8z"/><path d="M33 6H15A10.300 10.300 0 1 0 26.500 18V9H15.500"/><path d="M23.500 9v9a8 8 0 0 1-8 7.500"/><path d="M15 11.500a5.800 5.800 0 1 0 5.500 8.500" /></g></svg>
          <div class="brand">${label("Anava", 78)}</div>
          <svg width="14" height="14" viewBox="0 0 14 14"><path d="M0 2h14M0 7h14M0 12h14" stroke="#fff" stroke-width="2.200"/></svg>
          <div class="exit">${fa(448, ARROW)}${label("Keluar", 50)}</div>
        </div>
        <div class="body">
          <div class="side">
            <div class="user">
              <svg width="50" height="50" viewBox="0 0 50 50"><clipPath id="av"><circle cx="25" cy="25" r="25"/></clipPath><g clip-path="url(#av)"><rect width="50" height="50" fill="#dcdcdc"/><path d="M12 17Q11 5 25 5q13 0 12 12 1 8-3 12-2 7 0 10 2 4 8 6v6H6v-6q8-2 10-6 2-4 0-10-4-4-4-12z" fill="#bababa"/></g></svg>
              <div class="who"><span class="name">${label("tetuko", 54)}</span>${label("Peserta", 60)}</div>
            </div>
            <div class="menu">
              ${NAV.map((n) => html`<div class=${classMap({ link: true, on: !!n.active })}>${n.i}${label(n.t, n.w)}${n.sub ? html`<span class="chev">${chevron}</span>` : nothing}</div>`)}
            </div>
          </div>
          <scroll-rail class="rail" .thumb=${506}></scroll-rail>
          <div class="main">
            <div class="card">${fa(448, COPY, 28.500, "#343a40")}${label("Administrasi", 178)}</div>
            <div class="rule"></div>
            <div class="panel">
              <div class="tabs"><div class="t1">${label("Dokumen", 77)}</div><div class="t2">${label("Identitas", 70)}</div></div>
              <div class="form">
                ${field("Nama depan", 106.500)} ${field("Nama belakang", 129.500)}
                ${label("Tanggal lahir", 105.500)}
                <div class="date">${label("mm/dd/yyyy", 110.500)}<svg width="15" height="17" viewBox="0 0 15 17"><path d="M1 2.500h13v13.500H1z" fill="none" stroke="#000" stroke-width="1.700"/><path d="M.5 2h14v4H.5zM2 0h2v3H2zM11 0h2v3h-2z"/></svg></div>
                ${field("Nomor HP", 79)}
              </div>
            </div>
          </div>
        </div>
      </div>
      <scroll-rail .thumb=${378}></scroll-rail>`;
  }
}

@customElement("app-root")
class AppRoot extends LitElement {
  static styles = css`
    :host { display: block; width: 1366px; height: 768px; overflow: hidden; }
    .desk { display: flex; height: 741px; }
    .window { width: 1299px; }
  `;
  render() {
    return html`<desktop-panel></desktop-panel>
      <div class="desk"><app-dock></app-dock><div class="window"><browser-chrome></browser-chrome><anava-page></anava-page></div></div>`;
  }
}
